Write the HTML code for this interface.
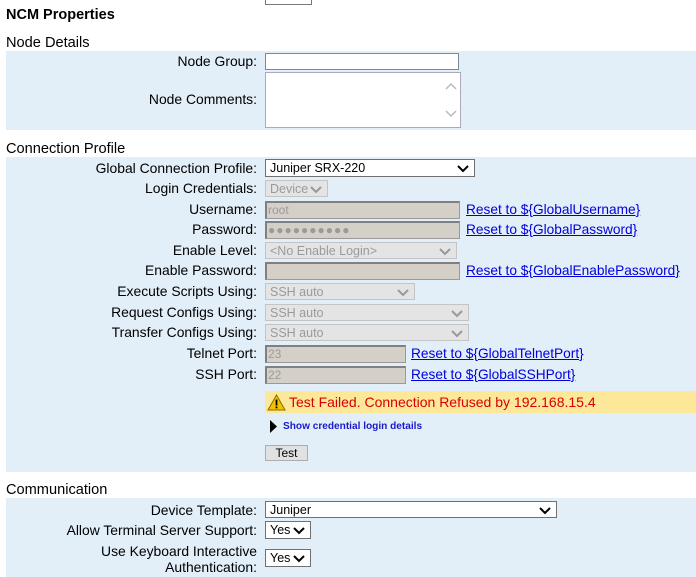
<!DOCTYPE html>
<html><head><style>
*{margin:0;padding:0;box-sizing:border-box}
body{width:696px;height:577px;overflow:hidden;background:#fff;font-family:"Liberation Sans",Arial,sans-serif;font-size:13px;color:#000;position:relative}
.a{position:absolute}
.panel{position:absolute;left:6px;right:0;background:#e2eef8}
.lbl{position:absolute;right:439px;text-align:right;white-space:nowrap;font-size:13.9px;line-height:15px}
.in{position:absolute;background:#fff;border:1px solid #7a8a99}
.dis{position:absolute;background:#d4d0c8;border:1px solid #999;border-top:2px solid #808080;border-left:2px solid #808080;color:#9a9a9a;font-size:12px;padding-left:1px;line-height:14px}
.sel{position:absolute;background:#fff;border:1px solid #707070;font-size:12.5px;padding-left:4px;line-height:16px}
.sd{position:absolute;background:#e4e4e4;border:1px solid #c4c4c4;color:#9a9a9a;font-size:12.5px;padding-left:4px;line-height:16px}
.sel svg,.sd svg{position:absolute;right:5px;top:5px}
.lnk{position:absolute;color:#0000dd;text-decoration:underline;font-size:13.7px;line-height:15px;white-space:nowrap}
.h{position:absolute;left:6px;font-size:14.6px}
</style></head><body>
<div class="a" style="left:265px;top:-2px;width:47px;height:7px;border:1px solid #777;background:#fff"></div>
<div class="a" style="left:6px;top:7px;font-size:14.5px;font-weight:bold">NCM Properties</div>
<div class="h" style="top:35px">Node Details</div>
<div class="panel" style="top:51px;height:79px"></div>
<div class="lbl" style="top:54px">Node Group:</div>
<div class="in" style="left:265px;top:53px;width:194px;height:17px"></div>
<div class="lbl" style="top:92px">Node Comments:</div>
<div class="in" style="left:265px;top:72px;width:196px;height:56px;border-color:#aab"><svg class="a" style="left:178px;top:9px" width="14" height="36"><path d="M2 7L7 2L12 7M2 29L7 34L12 29" fill="none" stroke="#bbb" stroke-width="1.5"/></svg></div>

<div class="h" style="top:141px">Connection Profile</div>
<div class="panel" style="top:157px;height:315px"></div>

<div class="lbl" style="top:161px">Global Connection Profile:</div>
<div class="sel" style="left:265px;top:159px;width:210px;height:18px">Juniper SRX-220<svg width="12" height="8"><path d="M1 1L6 6L11 1" fill="none" stroke="#000" stroke-width="2"/></svg></div>
<div class="lbl" style="top:181px">Login Credentials:</div>
<div class="sd" style="left:265px;top:180px;width:63px;height:17px">Device<svg width="12" height="8"><path d="M1 1L6 6L11 1" fill="none" stroke="#999" stroke-width="2"/></svg></div>
<div class="lbl" style="top:202px">Username:</div>
<div class="dis" style="left:265px;top:201px;width:195px;height:18px">root</div>
<div class="lnk" style="left:466px;top:202px">Reset to ${GlobalUsername}</div>
<div class="lbl" style="top:222px">Password:</div>
<div class="dis" style="left:265px;top:221px;width:195px;height:18px;letter-spacing:1px">●●●●●●●●●●</div>
<div class="lnk" style="left:466px;top:222px">Reset to ${GlobalPassword}</div>
<div class="lbl" style="top:243px">Enable Level:</div>
<div class="sd" style="left:265px;top:242px;width:192px;height:17px">&lt;No Enable Login&gt;<svg width="12" height="8"><path d="M1 1L6 6L11 1" fill="none" stroke="#999" stroke-width="2"/></svg></div>
<div class="lbl" style="top:263px">Enable Password:</div>
<div class="dis" style="left:265px;top:262px;width:195px;height:18px"></div>
<div class="lnk" style="left:466px;top:263px">Reset to ${GlobalEnablePassword}</div>
<div class="lbl" style="top:284px">Execute Scripts Using:</div>
<div class="sd" style="left:265px;top:283px;width:150px;height:17px">SSH auto<svg width="12" height="8"><path d="M1 1L6 6L11 1" fill="none" stroke="#999" stroke-width="2"/></svg></div>
<div class="lbl" style="top:305px">Request Configs Using:</div>
<div class="sd" style="left:265px;top:304px;width:204px;height:17px">SSH auto<svg width="12" height="8"><path d="M1 1L6 6L11 1" fill="none" stroke="#999" stroke-width="2"/></svg></div>
<div class="lbl" style="top:325px">Transfer Configs Using:</div>
<div class="sd" style="left:265px;top:324px;width:204px;height:17px">SSH auto<svg width="12" height="8"><path d="M1 1L6 6L11 1" fill="none" stroke="#999" stroke-width="2"/></svg></div>
<div class="lbl" style="top:346px">Telnet Port:</div>
<div class="dis" style="left:265px;top:345px;width:141px;height:18px">23</div>
<div class="lnk" style="left:411px;top:346px">Reset to ${GlobalTelnetPort}</div>
<div class="lbl" style="top:367px">SSH Port:</div>
<div class="dis" style="left:265px;top:366px;width:141px;height:18px">22</div>
<div class="lnk" style="left:411px;top:367px">Reset to ${GlobalSSHPort}</div>

<div class="a" style="left:265px;top:391px;width:431px;height:22px;background:#fde89a"></div>
<svg class="a" style="left:267px;top:394px" width="19" height="17"><path d="M9.5 1L18 16H1Z" fill="#f5c400" stroke="#8a6a00" stroke-width="1"/><rect x="8.6" y="5.5" width="1.8" height="6" fill="#000"/><rect x="8.6" y="12.5" width="1.8" height="1.8" fill="#000"/></svg>
<div class="a" style="left:289px;top:394px;color:#d80000;font-size:14px;line-height:17px">Test Failed. Connection Refused by 192.168.15.4</div>
<svg class="a" style="left:270px;top:420px" width="7" height="13"><path d="M0 0L7 6.5L0 13Z" fill="#000"/></svg>
<div class="a" style="left:283px;top:420px;color:#1a1acc;font-size:10.1px;font-weight:bold;line-height:14px">Show credential login details</div>
<div class="a" style="left:265px;top:445px;width:43px;height:16px;background:#e1e1e1;border:1px solid #adadad;font-size:12px;text-align:center;line-height:14px">Test</div>

<div class="h" style="top:482px">Communication</div>
<div class="panel" style="top:498px;height:79px"></div>
<div class="lbl" style="top:503px">Device Template:</div>
<div class="sel" style="left:265px;top:501px;width:292px;height:17px">Juniper<svg width="12" height="8"><path d="M1 1L6 6L11 1" fill="none" stroke="#000" stroke-width="2"/></svg></div>
<div class="lbl" style="top:523px">Allow Terminal Server Support:</div>
<div class="sel" style="left:265px;top:521px;width:46px;height:18px">Yes<svg width="12" height="8"><path d="M1 1L6 6L11 1" fill="none" stroke="#000" stroke-width="2"/></svg></div>
<div class="lbl" style="top:543px;line-height:16px">Use Keyboard Interactive<br>Authentication:</div>
<div class="sel" style="left:265px;top:549px;width:46px;height:18px">Yes<svg width="12" height="8"><path d="M1 1L6 6L11 1" fill="none" stroke="#000" stroke-width="2"/></svg></div>
</body></html>
